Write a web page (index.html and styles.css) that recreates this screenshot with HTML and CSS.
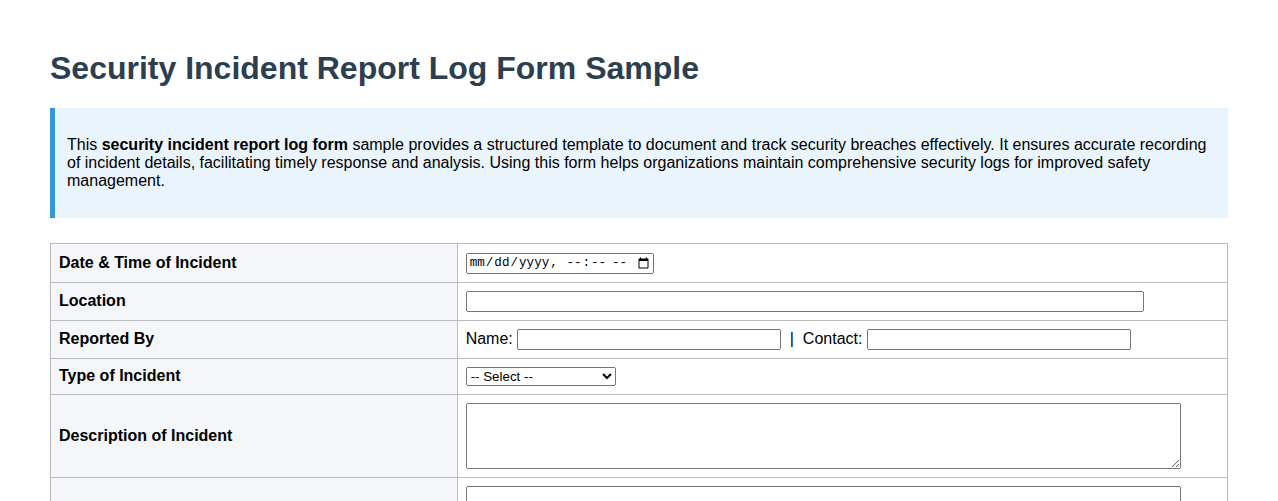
FILE: index.html
```html
<!DOCTYPE html>
<html lang="en">
<head>
<meta charset="utf-8">
<title>Security Incident Report Log Form Sample</title>
<link rel="stylesheet" href="styles.css">
</head>
<body>
<h1 class="title">Security Incident Report Log Form Sample</h1>
<div class="intro">
  <p>This <strong>security incident report log form</strong> sample provides a structured template to document and track security breaches effectively. It ensures accurate recording of incident details, facilitating timely response and analysis. Using this form helps organizations maintain comprehensive security logs for improved safety management.</p>
</div>
<form class="report">
  <table class="grid">
    <tr>
      <th class="label">Date &amp; Time of Incident</th>
      <td class="field"><input type="datetime-local" class="dt"></td>
    </tr>
    <tr>
      <th class="label">Location</th>
      <td class="field"><input type="text" class="wide"></td>
    </tr>
    <tr>
      <th class="label">Reported By</th>
      <td class="field">Name: <input type="text" class="half"> &nbsp;|&nbsp; Contact: <input type="text" class="half"></td>
    </tr>
    <tr>
      <th class="label">Type of Incident</th>
      <td class="field">
        <select class="pick">
          <option>-- Select --</option>
          <option>Unauthorized Access</option>
          <option>Theft</option>
          <option>Vandalism</option>
          <option>Malware</option>
          <option>Other</option>
        </select>
      </td>
    </tr>
    <tr>
      <th class="label">Description of Incident</th>
      <td class="field"><textarea class="area"></textarea></td>
    </tr>
    <tr>
      <th class="label">Actions Taken</th>
      <td class="field"><textarea class="area"></textarea></td>
    </tr>
  </table>
</form>
</body>
</html>
```
FILE: styles.css
```css
body {
  margin: 0;
  padding: 50px 50px 40px;
  font-family: "Liberation Sans", Arial, sans-serif;
  font-size: 16px;
  color: #000;
  background: #fff;
}
.title {
  margin: 0 0 21.44px;
  font-size: 32px;
  color: #2c3e50;
}
.intro {
  background: #eaf4fd;
  border-left: 5px solid #3498db;
  padding: 12px;
  margin-bottom: 25px;
}
.intro p {
  margin: 16px 0;
}
.grid {
  width: 100%;
  border-collapse: collapse;
}
.label,
.field {
  border: 1px solid #bbb;
  padding: 8px;
  vertical-align: middle;
}
.label {
  width: 34.55%;
  text-align: left;
  background: #f4f6f9;
  font-weight: bold;
}
.field input,
.field select,
.field textarea {
  box-sizing: border-box;
}
.dt {
  width: 188px;
  font-family: "Liberation Mono", monospace;
  font-size: 12.6px;
}
.wide { width: 90%; }
.half { width: 35%; }
.pick {
  width: 150px;
  font-family: "Liberation Sans", Arial, sans-serif;
}
.area {
  width: 95%;
  height: 66px;
  vertical-align: middle;
}
```
